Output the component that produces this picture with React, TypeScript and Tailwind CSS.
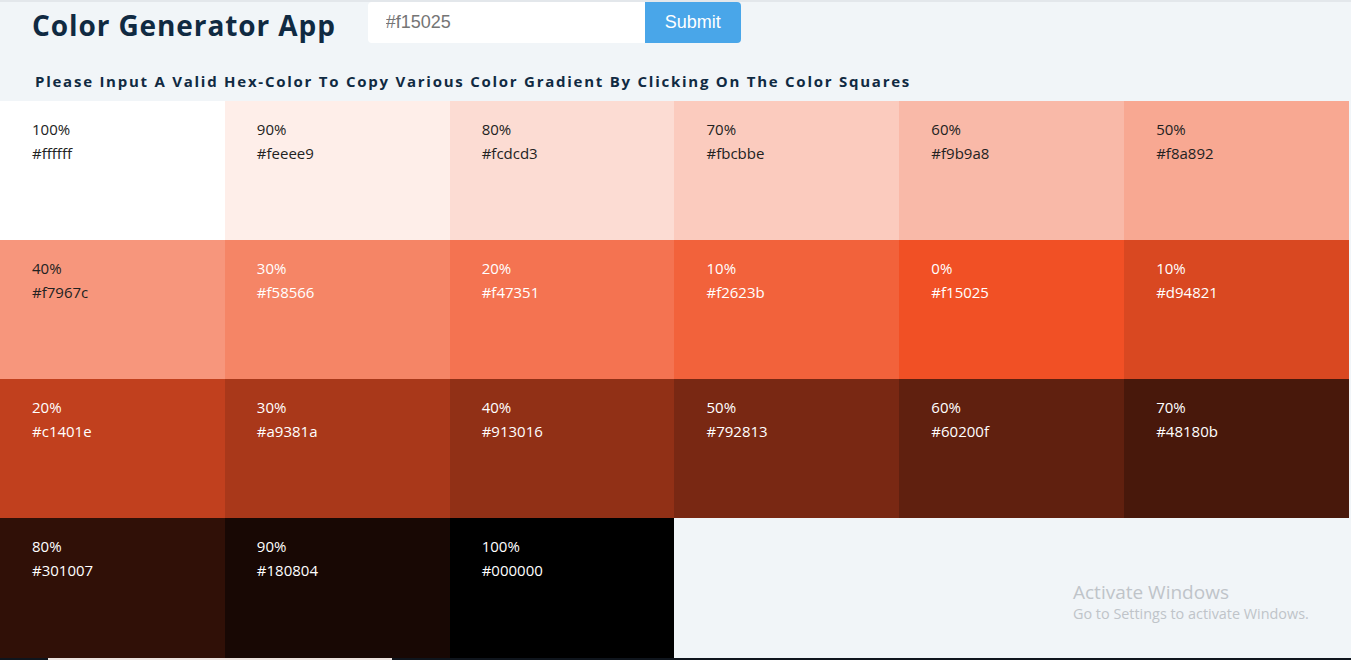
const COLORS = [
  { w: "100%", hex: "#ffffff" },
  { w: "90%", hex: "#feeee9" },
  { w: "80%", hex: "#fcdcd3" },
  { w: "70%", hex: "#fbcbbe" },
  { w: "60%", hex: "#f9b9a8" },
  { w: "50%", hex: "#f8a892" },
  { w: "40%", hex: "#f7967c" },
  { w: "30%", hex: "#f58566" },
  { w: "20%", hex: "#f47351" },
  { w: "10%", hex: "#f2623b" },
  { w: "0%", hex: "#f15025" },
  { w: "10%", hex: "#d94821" },
  { w: "20%", hex: "#c1401e" },
  { w: "30%", hex: "#a9381a" },
  { w: "40%", hex: "#913016" },
  { w: "50%", hex: "#792813" },
  { w: "60%", hex: "#60200f" },
  { w: "70%", hex: "#48180b" },
  { w: "80%", hex: "#301007" },
  { w: "90%", hex: "#180804" },
  { w: "100%", hex: "#000000" },
];

export default function App() {
  return (
    <div className="relative h-[660px] overflow-hidden border-t-2 border-[#e3e7eb] bg-[#f1f5f8] font-['Open_Sans',sans-serif]">
      {/* Header */}
      <section className="flex items-center pl-8 h-[41px]">
        <h3 className="mt-[4px] mr-[32px] text-[28px] font-bold tracking-[0.9px] text-[#102a42]">Color Generator App</h3>
        <form className="flex h-[41px]" onSubmit={(e) => e.preventDefault()}>
          <input
            type="text"
            defaultValue="#f15025"
            className="w-[277px] bg-white px-[18px] text-[18px] text-[#757575] outline-none font-['Liberation_Sans',sans-serif] rounded-l"
          />
          <button className="w-[96px] bg-[#49a6e9] text-white text-[18px] rounded-r font-['Liberation_Sans',sans-serif]">
            Submit
          </button>
        </form>
      </section>

      <h4 className="mt-[27px] pl-[35px] text-[15px] font-bold tracking-[1.75px] text-[#102a42]">
        Please Input A Valid Hex-Color To Copy Various Color Gradient By Clicking On The Color Squares
      </h4>

      {/* Colors */}
      <section className="mt-[8px] grid w-[1349px] grid-cols-6 auto-rows-[139.3px]">
        {COLORS.map((c, i) => (
          <article
            key={i}
            className={`cursor-pointer px-8 pt-[16px] text-[15px] leading-6 ${i > 6 ? "text-white" : "text-[#222]"}`}
            style={{ background: c.hex }}
          >
            <p>{c.w}</p>
            <p>{c.hex}</p>
          </article>
        ))}
      </section>

      {/* Windows watermark */}
      <div className="absolute left-[1073px] top-[578px] text-[#bfc4c9]">
        <p className="text-[19px] leading-6">Activate Windows</p>
        <p className="text-[14.4px] leading-5">Go to Settings to activate Windows.</p>
      </div>

      {/* taskbar edge */}
      <div className="absolute bottom-0 left-0 h-[2px] w-full bg-[#0f151d]">
        <div className="ml-[48px] h-full w-[344px] bg-[#ece4e0]" />
      </div>
    </div>
  );
}
